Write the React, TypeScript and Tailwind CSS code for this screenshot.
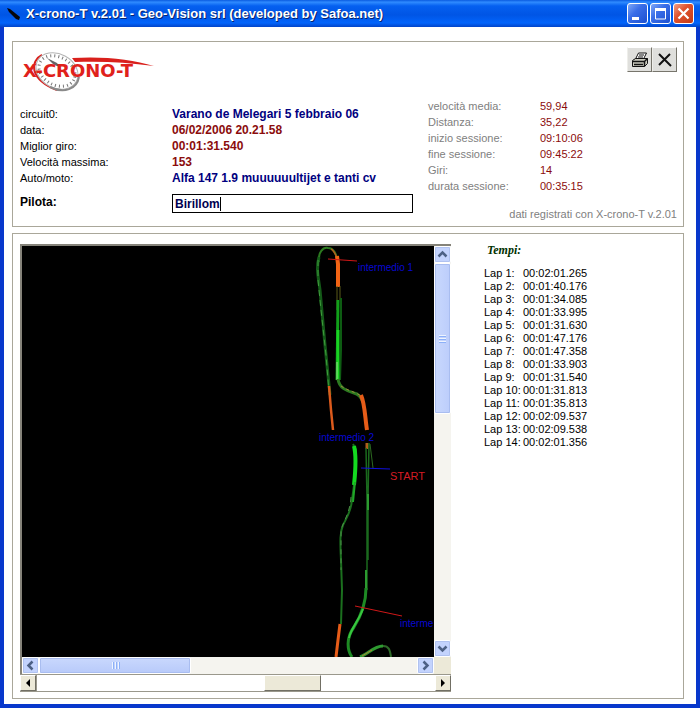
import type { ReactNode } from "react";

const session = [
  { label: "circuit0:", value: "Varano de Melegari 5 febbraio 06", color: "text-[#000080]" },
  { label: "data:", value: "06/02/2006 20.21.58", color: "text-[#8b0c0c]" },
  { label: "Miglior giro:", value: "00:01:31.540", color: "text-[#8b0c0c]" },
  { label: "Velocità massima:", value: "153", color: "text-[#8b0c0c]" },
  { label: "Auto/moto:", value: "Alfa 147 1.9 muuuuuultijet e tanti cv", color: "text-[#000080]" },
];

const stats = [
  { label: "velocità media:", value: "59,94" },
  { label: "Distanza:", value: "35,22" },
  { label: "inizio sessione:", value: "09:10:06" },
  { label: "fine sessione:", value: "09:45:22" },
  { label: "Giri:", value: "14" },
  { label: "durata sessione:", value: "00:35:15" },
];

const laps = [
  "00:02:01.265",
  "00:01:40.176",
  "00:01:34.085",
  "00:01:33.995",
  "00:01:31.630",
  "00:01:47.176",
  "00:01:47.358",
  "00:01:33.903",
  "00:01:31.540",
  "00:01:31.813",
  "00:01:35.813",
  "00:02:09.537",
  "00:02:09.538",
  "00:02:01.356",
];

function TitleBar() {
  return (
    <header className="flex h-[27px] shrink-0 items-center bg-[linear-gradient(180deg,#0a5be0_0%,#2f8bff_8%,#0560f0_22%,#0055e5_55%,#0264fb_85%,#0244c8_100%)] pr-[6px] pl-[7px]">
      <svg width="14" height="14" viewBox="0 0 14 14" aria-hidden="true">
        <path d="M0 1 L3 2 L13 10 L12 13 L9 12 L2 5 Z" fill="#06060c" />
      </svg>
      <h1 className="ml-[5px] flex-1 truncate text-[13px] font-bold text-white [text-shadow:1px_1px_0_#06246e]">
        X-crono-T v.2.01 - Geo-Vision srl (developed by Safoa.net)
      </h1>
      <div className="flex gap-[2px]">
        <CaptionButton label="Riduci a icona">
          <path d="M5 14h7v3H5z" fill="#fff" />
        </CaptionButton>
        <CaptionButton label="Ingrandisci">
          <path d="M5.5 6h10v10h-10z" fill="none" stroke="#fff" />
          <path d="M5 5h11v3H5z" fill="#fff" />
        </CaptionButton>
        <CaptionButton label="Chiudi" close>
          <path d="M5.5 5.5l10 10M15.5 5.5l-10 10" stroke="#fff" strokeWidth="2.2" />
        </CaptionButton>
      </div>
    </header>
  );
}

function CaptionButton({ label, close, children }: { label: string; close?: boolean; children: ReactNode }) {
  return (
    <button
      type="button"
      aria-label={label}
      className={
        close
          ? "size-[21px] overflow-hidden rounded-[3px] border border-white bg-[linear-gradient(135deg,#f0a088_0%,#e0532f_40%,#c43a14_100%)]"
          : "size-[21px] overflow-hidden rounded-[3px] border border-white bg-[linear-gradient(135deg,#7fa8f8_0%,#3a6ee8_40%,#1c50d0_100%)]"
      }
    >
      <svg viewBox="1 1 19 19" className="size-full" aria-hidden="true">
        {children}
      </svg>
    </button>
  );
}

function Logo() {
  return (
    <svg width="136" height="42" viewBox="0 0 136 42" role="img" aria-label="X-crono-T">
      <path d="M22 5C10 11 9 29 37 40" fill="none" stroke="#d9201c" strokeWidth="2" />
      <ellipse cx="37" cy="21" rx="22" ry="17" transform="rotate(28 37 21)" fill="#fff" stroke="#b4b4b4" />
      <ellipse cx="37" cy="21" rx="19" ry="14" transform="rotate(28 37 21)" fill="none" stroke="#777" strokeWidth="3" strokeDasharray="1 3" />
      <path d="M30 37C44 44 57 39 59 27" fill="none" stroke="#8a8a8a" strokeWidth="2" />
      <path d="M27 8L37 13L40 17L34 15Z" fill="#666" />
      <path d="M52 8C82 6 112 9 134 16C106 12 80 11 55 12Z" fill="#d9201c" />
      <text x="3" y="27" fill="#e0211b" className="font-['DejaVu_Sans',sans-serif] text-[18px] font-bold">
        X-CRONO-T
      </text>
    </svg>
  );
}

function ToolButton({ label, children }: { label: string; children: ReactNode }) {
  return (
    <button
      type="button"
      aria-label={label}
      className="flex h-[25px] w-[25px] items-center justify-center border border-t-white border-r-[#77756c] border-b-[#77756c] border-l-[#eeeeea] bg-[#dfdfdc]"
    >
      <svg width="18" height="18" viewBox="0 0 18 18" fill="none" stroke="#111" aria-hidden="true">
        {children}
      </svg>
    </button>
  );
}

function SessionPanel() {
  return (
    <section className="grid grid-cols-[408px_1fr] border border-[#aaa79a] pt-[5px] pr-[6px] pb-[4px] pl-[7px]">
      <div className="pb-[9px]">
        <div className="pt-[3px] pb-[14px]">
          <Logo />
        </div>
        <dl>
          {session.map((item) => (
            <div key={item.label} className="flex h-4 items-center">
              <dt className="w-[152px]">{item.label}</dt>
              <dd className={`text-[12px] font-bold ${item.color}`}>{item.value}</dd>
            </div>
          ))}
        </dl>
        <div className="mt-2 flex">
          <label htmlFor="pilota" className="w-[152px] text-[12px] leading-4 font-bold">
            Pilota:
          </label>
          <div className="flex h-[19px] w-[241px] items-center border border-black bg-white px-[2px]">
            <input
              id="pilota"
              defaultValue="Birillom"
              className="field-sizing-content border-r border-black text-[12px] leading-[14px] font-bold text-[#000050] outline-none"
            />
          </div>
        </div>
      </div>
      <div className="flex flex-col">
        <div className="flex justify-end">
          <ToolButton label="Stampa">
            <path d="M4.500 8l3-6h8l-3 6z" fill="#fff" />
            <path d="M8 4h5M7 6h5" />
            <path d="M1.500 9.500l3-2h12v5l-3 3h-12z" fill="#c9c9bd" />
            <path d="M1.500 10.500h12l3-3M13.500 10.500v5M3 13.500h9" strokeWidth="1.500" />
          </ToolButton>
          <ToolButton label="Esci">
            <path d="M3 3l12 12M14 3L3 14" strokeWidth="2" />
          </ToolButton>
        </div>
        <dl className="mt-[26px]">
          {stats.map((item) => (
            <div key={item.label} className="flex h-4 items-center">
              <dt className="w-[112px] text-[#808080]">{item.label}</dt>
              <dd className="text-[#8b0c0c]">{item.value}</dd>
            </div>
          ))}
        </dl>
        <p className="mt-auto text-right leading-4 text-[#808080]">dati registrati con X-crono-T v.2.01</p>
      </div>
    </section>
  );
}

function TrackMap() {
  return (
    <svg viewBox="22 246 412 411" className="h-[411px] min-w-0 flex-1 bg-black" fill="none">
      {/* upper loop */}
      <path d="M319 262C318 252 323 247 328 248C334 248 336 254 338 261" stroke="#2c7a20" strokeWidth="2" />
      <path d="M331 249C335 251 336 256 338 261" stroke="#b0601c" strokeWidth="1.500" />
      <path d="M319 257C316 268 318 275 320 290L325 345L330 395" stroke="#145a18" strokeWidth="3" />
      <path d="M318 260V280L321 310L326 355L329 392" stroke="#3f9d3c" strokeDasharray="6 4" />
      <path d="M329 386L331 410L333 430" stroke="#dc5a1c" strokeWidth="2.500" />
      <path d="M337 256L338 264V287" stroke="#f26414" strokeWidth="4" />
      <path d="M337 286V310M340 286V300" stroke="#5a5a18" />
      <path d="M338 300L337 380" stroke="#11a01a" strokeWidth="3" />
      <path d="M341 298V350L340 380" stroke="#0d5c12" strokeWidth="2" />
      <path d="M338 330V380" stroke="#18d422" strokeWidth="3" />
      <path d="M337 362V380" stroke="#9adf8c" />
      <path d="M338 379C339 388 347 391 354 393C359 394 361 397 363 402" stroke="#2c7a20" strokeWidth="3" />
      <path d="M341 386C348 391 356 392 361 396" stroke="#a08a3c" strokeDasharray="3 3" />
      <path d="M361 395C365 404 365 418 367 430" stroke="#e65c18" strokeWidth="4" />
      {/* start straight */}
      <path d="M353 444L356 450L355 478L352 500C351 512 347 517 343 525C340 532 340 540 341 560L342 590L341 624" stroke="#1b701e" strokeWidth="2" />
      <path d="M351 497C350 513 344 520 341 530V570" stroke="#4b8c46" strokeDasharray="5 4" />
      <path d="M354 446C357 458 355 475 354 485" stroke="#14da20" strokeWidth="4" />
      <path d="M355 482L353 502" stroke="#20a828" strokeWidth="2" />
      <path d="M340 624L338 640L336 657" stroke="#e65c18" strokeWidth="3" />
      <path d="M367 443V449" stroke="#b0601c" strokeWidth="3" />
      <path d="M366 448L367 500L367 590M369 443L368 500V560" stroke="#1b6a1e" strokeWidth="1.500" />
      <path d="M370 444L373 468" stroke="#2c6a20" />
      <path d="M368 494V510M366 570V592" stroke="#2c9a30" strokeWidth="2" />
      <path d="M366 588C366 604 361 616 354 627C346 638 347 650 352 657" stroke="#1e8a24" strokeWidth="3" />
      <path d="M363 609C359 620 350 630 349 638" stroke="#38c840" strokeWidth="2" />
      <path d="M360 657C368 654 374 646 383 646" stroke="#2e9a30" strokeWidth="3" />
      <path d="M362 656L372 650" stroke="#b08030" />
      <path d="M383 646C389 646 390 650 391 657" stroke="#2e6a28" strokeWidth="2" />
      {/* gates */}
      <path d="M328 259L357 261" stroke="#d01818" />
      <path d="M361 468L390 469" stroke="#1010e0" />
      <path d="M355 606L402 616" stroke="#d01818" />
      <g fill="#0808d0" className="text-[10px]">
        <text x="358" y="271">intermedio 1</text>
        <text x="319" y="441">intermedio 2</text>
        <text x="400" y="627">interme</text>
      </g>
      <text x="390" y="480" fill="#d41c24" className="text-[11px]">START</text>
    </svg>
  );
}

function ArrowButton({ label, d }: { label: string; d: string }) {
  return (
    <button
      type="button"
      aria-label={label}
      className="flex size-[17px] shrink-0 items-center justify-center rounded-[2px] border border-white bg-[#c3d3fd] outline -outline-offset-2 outline-[#b0c2f0]"
    >
      <svg width="11" height="11" viewBox="0 0 11 11" fill="none" stroke="#4d6185" strokeWidth="2.500" aria-hidden="true">
        <path d={d} />
      </svg>
    </button>
  );
}

function ClassicButton({ label, d }: { label: string; d: string }) {
  return (
    <button
      type="button"
      aria-label={label}
      className="flex h-4 w-4 items-center justify-center border border-t-white border-r-[#716f64] border-b-[#716f64] border-l-white bg-[#ece9d8]"
    >
      <svg width="6" height="8" viewBox="0 0 6 8" aria-hidden="true">
        <path d={d} fill="#000" />
      </svg>
    </button>
  );
}

function TrackViewer() {
  return (
    <div className="w-[431px] shrink-0">
      <div className="border-t-2 border-l-2 border-t-[#85837a] border-l-[#85837a]">
        <div className="flex">
          <TrackMap />
          <div className="flex w-[17px] flex-col bg-[#f5f4ef]">
            <ArrowButton label="Su" d="M1.500 7.500l4-4 4 4" />
            <div className="flex h-[151px] flex-col items-center justify-center gap-px rounded-[2px] border border-white bg-[linear-gradient(90deg,#c9d8fd,#bccdfb)] outline -outline-offset-2 outline-[#a9bdf0]">
              <span className="h-px w-[7px] bg-[#eef4fe] shadow-[0_1px_#8cb0f8]" />
              <span className="mt-px h-px w-[7px] bg-[#eef4fe] shadow-[0_1px_#8cb0f8]" />
              <span className="mt-px h-px w-[7px] bg-[#eef4fe] shadow-[0_1px_#8cb0f8]" />
            </div>
            <div className="flex-1" />
            <ArrowButton label="Giù" d="M1.500 3.500l4 4 4-4" />
          </div>
        </div>
        <div className="flex h-[17px] bg-[#f5f4ef]">
          <ArrowButton label="Sinistra" d="M7.500 1.500l-4 4 4 4" />
          <div className="flex w-[152px] items-center justify-center gap-px rounded-[2px] border border-white bg-[linear-gradient(180deg,#c9d8fd,#b8cafa)] outline -outline-offset-2 outline-[#a9bdf0]">
            <span className="h-[7px] w-px bg-[#eef4fe] shadow-[1px_0_#8cb0f8]" />
            <span className="ml-px h-[7px] w-px bg-[#eef4fe] shadow-[1px_0_#8cb0f8]" />
            <span className="ml-px h-[7px] w-px bg-[#eef4fe] shadow-[1px_0_#8cb0f8]" />
          </div>
          <div className="flex-1" />
          <ArrowButton label="Destra" d="M3.500 1.500l4 4-4 4" />
          <div className="w-[17px] bg-[#ece9d8]" />
        </div>
      </div>
      <div className="flex h-[18px] border-t border-b border-t-[#9a988c] border-b-[#9a988c] bg-white">
        <ClassicButton label="Indietro" d="M5 0v8L1 4z" />
        <div className="flex-1 border-l border-[#9a988c]" />
        <div className="w-[57px] border border-t-white border-r-[#716f64] border-b-[#716f64] border-l-white bg-[#ece9d8]" />
        <div className="w-[114px]" />
        <ClassicButton label="Avanti" d="M1 0v8l4-4z" />
      </div>
    </div>
  );
}

function LapTimes() {
  return (
    <div className="pl-[33px]">
      <h2 className="pl-[3px] font-['Liberation_Serif',serif] text-[12px] leading-[13px] font-bold text-[#003000] italic">
        Tempi:
      </h2>
      <table className="mt-[10px]">
        <tbody>
          {laps.map((time, i) => (
            <tr key={i} className="h-[13px] leading-[13px]">
              <th scope="row" className="w-[39px] p-0 text-left font-normal whitespace-nowrap">
                Lap {i + 1}:
              </th>
              <td className="p-0">{time}</td>
            </tr>
          ))}
        </tbody>
      </table>
    </div>
  );
}

export default function App() {
  return (
    <div className="flex min-h-screen flex-col bg-[#0838cc] font-['Liberation_Sans',Arial,sans-serif] text-[11px] text-black">
      <TitleBar />
      <main className="mx-1 mb-1 flex flex-1 flex-col gap-[6px] bg-white pt-[14px] pr-3 pb-[5px] pl-2">
        <SessionPanel />
        <section className="flex flex-1 border border-[#aaa79a] pt-[10px] pb-[6px] pl-[7px]">
          <TrackViewer />
          <LapTimes />
        </section>
      </main>
    </div>
  );
}
